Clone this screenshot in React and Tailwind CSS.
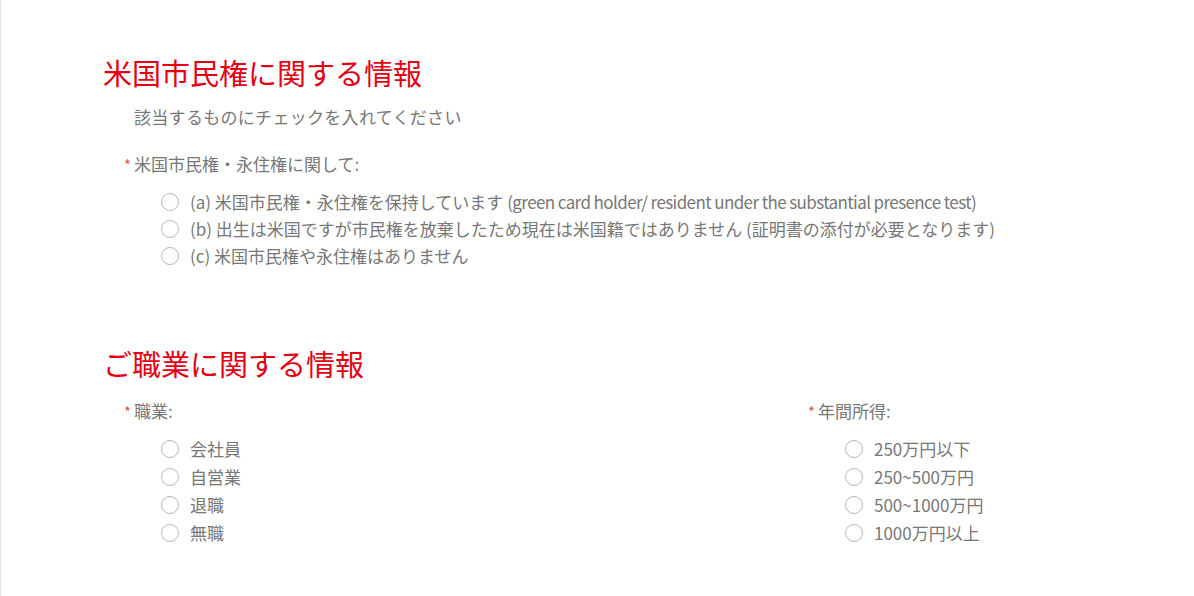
import React from "react";

const FONT = { fontFamily: '"Noto Sans CJK JP", "Noto Sans", sans-serif' };

function Radio({ label, h = "h-[27px]" }) {
  return (
    <label className={`flex items-center ${h}`}>
      <span className="block w-[18px] h-[18px] min-w-[18px] rounded-full border border-[#b8b8b8] bg-white shrink-0" />
      <span className="ml-[11px] whitespace-nowrap">{label}</span>
    </label>
  );
}

function FieldLabel({ children }) {
  return (
    <div className="flex items-center h-[24px] pl-[21px]">
      <span className="text-[#e85555] text-[15px] w-[10px] leading-none">*</span>
      <span>{children}</span>
    </div>
  );
}

export default function App() {
  return (
    <div
      className="min-h-[596px] w-full bg-white border-l border-[#e3e3e3] text-[#777777] text-[17px] pl-[102px]"
      style={FONT}
    >
      <h2 className="mt-0 pt-[52px] text-[29px] leading-[40px] text-[#e60012] font-normal">
        米国市民権に関する情報
      </h2>
      <p className="mt-[13px] pl-[31px] leading-[24px] tracking-[0.3px]">該当するものにチェックを入れてください</p>
      <div className="mt-[23px]">
        <FieldLabel>米国市民権・永住権に関して:</FieldLabel>
        <div className="mt-[12px] pl-[58px]">
          <Radio
            label={
              <>
                (a) 米国市民権・永住権を保持しています{" "}
                <span className="tracking-[-0.6px]">(green card holder/ resident under the substantial presence test)</span>
              </>
            }
          />
          <Radio label="(b) 出生は米国ですが市民権を放棄したため現在は米国籍ではありません (証明書の添付が必要となります)" />
          <Radio label="(c) 米国市民権や永住権はありません" />
        </div>
      </div>

      <h2 className="mt-[74px] text-[29px] leading-[40px] text-[#e60012] font-normal">
        ご職業に関する情報
      </h2>
      <div className="mt-[16px] flex">
        <div className="w-[684px] shrink-0">
          <FieldLabel>職業:</FieldLabel>
          <div className="mt-[12px] pl-[58px]">
            <Radio h="h-[28px]" label="会社員" />
            <Radio h="h-[28px]" label="自営業" />
            <Radio h="h-[28px]" label="退職" />
            <Radio h="h-[28px]" label="無職" />
          </div>
        </div>
        <div>
          <FieldLabel>年間所得:</FieldLabel>
          <div className="mt-[12px] pl-[58px]">
            <Radio h="h-[28px]" label="250万円以下" />
            <Radio h="h-[28px]" label="250~500万円" />
            <Radio h="h-[28px]" label="500~1000万円" />
            <Radio h="h-[28px]" label="1000万円以上" />
          </div>
        </div>
      </div>
    </div>
  );
}
